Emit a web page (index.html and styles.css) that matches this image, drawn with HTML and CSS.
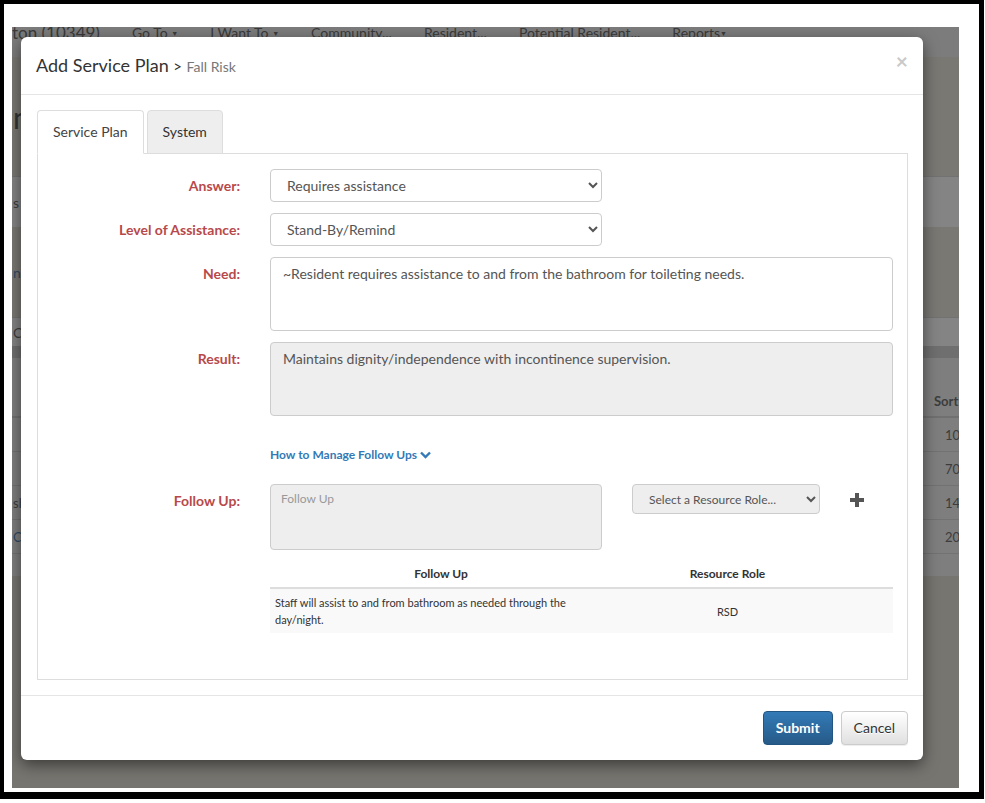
FILE: index.html
```html
<!DOCTYPE html>
<html lang="en">
  <head>
    <meta charset="UTF-8" />
    <meta name="viewport" content="width=device-width, initial-scale=1.0" />
    <title>Add Service Plan</title>
    <link rel="stylesheet" href="styles.css">
  </head>
  <body>
    <div class="frame">
      <div class="backdrop">
        <!-- dimmed app page behind the dialog -->
        <div class="app">
          <div class="app-nav">
            <span class="brand">ton (10349)</span>
            <span>Go To <i class="caret">&#9660;</i></span>
            <span>I Want To <i class="caret">&#9660;</i></span>
            <span>Community...</span>
            <span>Resident...</span>
            <span>Potential Resident...</span>
            <span>Reports<i class="caret">&#9660;</i></span>
          </div>
          <div class="app-band band-title"><span class="cut big">n</span></div>
          <div class="app-band band-light"><span class="cut">s</span></div>
          <div class="app-band band-mid"><span class="cut link">n</span></div>
          <div class="app-band band-light small"><span class="cut">C</span></div>
          <div class="app-band band-dark"></div>
          <div class="app-table">
            <div class="app-row app-gap"></div>
            <div class="app-row app-head"><span class="cut"></span><span class="sort">Sort</span></div>
            <div class="app-row"><span class="cut"></span><span class="num">100</span></div>
            <div class="app-row"><span class="cut"></span><span class="num">700</span></div>
            <div class="app-row"><span class="cut">sh</span><span class="num">1400</span></div>
            <div class="app-row"><span class="cut link">C</span><span class="num">2000</span></div>
          </div>
        </div>

        <!-- Add Service Plan dialog -->
        <div class="modal">
          <div class="modal-header">
            <h4 class="modal-title">Add Service Plan <span class="crumb">&gt;</span> <small>Fall Risk</small></h4>
            <span class="close">&times;</span>
          </div>

          <div class="modal-body">
            <ul class="tabs">
              <li class="tab active">Service Plan</li>
              <li class="tab">System</li>
            </ul>

            <div class="tab-pane">
              <div class="form-row">
                <label class="form-label" for="answer">Answer:</label>
                <div>
                  <select id="answer" class="form-select">
                    <option>Requires assistance</option>
                  </select>
                </div>
              </div>

              <div class="form-row">
                <label class="form-label" for="level">Level of Assistance:</label>
                <div>
                  <select id="level" class="form-select">
                    <option>Stand-By/Remind</option>
                  </select>
                </div>
              </div>

              <div class="form-row">
                <label class="form-label" for="need">Need:</label>
                <textarea id="need" class="form-text">~Resident requires assistance to and from the bathroom for toileting needs.</textarea>
              </div>

              <div class="form-row">
                <label class="form-label" for="result">Result:</label>
                <textarea id="result" class="form-text" disabled>Maintains dignity/independence with incontinence supervision.</textarea>
              </div>

              <div class="form-row link-row">
                <span></span>
                <a class="help-link" href="#">How to Manage Follow Ups
                  <svg width="11" height="8" viewBox="0 0 11 8"><path d="M1 1.5 L5.5 6 L10 1.5" fill="none" stroke="#337ab7" stroke-width="2.4"/></svg>
                </a>
              </div>

              <div class="form-row last-row">
                <label class="form-label" for="followUp">Follow Up:</label>
                <div>
                  <div class="follow-controls">
                    <textarea id="followUp" class="form-text follow-text" placeholder="Follow Up" disabled></textarea>
                    <select class="form-select role-select" disabled>
                      <option>Select a Resource Role...</option>
                    </select>
                    <svg class="plus" width="14" height="14" viewBox="0 0 14 14"><rect x="5" y="0" width="4" height="14" fill="#555"/><rect x="0" y="5" width="14" height="4" fill="#555"/></svg>
                  </div>

                  <table class="follow-table">
                    <colgroup>
                      <col style="width: 342px" />
                      <col style="width: 231px" />
                      <col />
                    </colgroup>
                    <thead>
                      <tr>
                        <th>Follow Up</th>
                        <th>Resource Role</th>
                        <th></th>
                      </tr>
                    </thead>
                    <tbody>
                      <tr>
                        <td>Staff will assist to and from bathroom as needed through the day/night.</td>
                        <td class="center">RSD</td>
                        <td></td>
                      </tr>
                    </tbody>
                  </table>
                </div>
              </div>
            </div>
          </div>

          <div class="modal-footer">
            <button class="btn btn-primary">Submit</button>
            <button class="btn btn-default">Cancel</button>
          </div>
        </div>
      </div>
    </div>
  </body>
</html>
```

FILE: styles.css
```css
body {
  margin: 0;
  background-color: #fff;
  font-family: Lato, "Open Sans", Arial, sans-serif;
}

.frame {
  width: 947px;
  height: 761px;
  padding: 23px 20px 4px 8px;
  border-style: solid;
  border-color: #000;
  border-width: 4px 5px 7px 4px;
}

.backdrop {
  position: relative;
  width: 947px;
  height: 761px;
  overflow: hidden;
  background-color: #777570;
}

/* app behind the overlay */
.app-nav {
  height: 30px;
  display: flex;
  gap: 32px;
  background-color: #7c7c7c;
  color: #3a3a3a;
  font-size: 14px;
  line-height: 14px;
  white-space: nowrap;
}

.app-nav span {
  margin-top: -1px;
}

.app-nav .brand {
  font-size: 17px;
  line-height: 17px;
  margin-top: -3px;
}

.caret {
  font-style: normal;
  font-size: 7px;
  vertical-align: 2px;
}

.app-band {
  display: flex;
  align-items: center;
  color: #3c3c3c;
  font-size: 14px;
}

.band-title {
  height: 119px;
  background-color: #7a7873;
}

.band-light {
  height: 50px;
  background-color: #848484;
  border-top: 1px solid #727272;
}

.band-light.small {
  height: 28px;
}

.band-mid {
  height: 90px;
  background-color: #7a7873;
}

.band-dark {
  height: 12px;
  background-color: #6f6f6f;
}

.cut {
  flex-shrink: 0;
  width: 20px;
  padding-left: 1px;
}

.cut.big {
  font-size: 30px;
  color: #333;
}

.cut.link {
  color: #2f4a63;
}

.app-table {
  background-color: #7e7e7e;
  height: 218px;
}

.app-row {
  display: flex;
  align-items: center;
  height: 33px;
  border-bottom: 1px solid #727272;
  color: #3c3c3c;
  font-size: 13px;
}

.app-gap {
  height: 27px;
  border-bottom: 0;
}

.app-head {
  height: 31px;
  border-bottom: 2px solid #707070;
}

.sort {
  flex-shrink: 0;
  margin-left: 901px;
  font-weight: 700;
}

.num {
  flex-shrink: 0;
  margin-left: 912px;
}

/* dialog */
.modal {
  position: absolute;
  left: 9px;
  top: 10px;
  width: 902px;
  background-color: #fff;
  border-radius: 6px;
  box-shadow: 0 5px 15px rgba(0, 0, 0, 0.5);
}

.modal-header {
  display: flex;
  justify-content: space-between;
  align-items: flex-start;
  height: 27px;
  padding: 15px;
  border-bottom: 1px solid #e5e5e5;
}

.modal-title {
  margin: 0;
  font-size: 18px;
  line-height: 27px;
  font-weight: 400;
  color: #333;
}

.crumb {
  font-size: 15px;
  line-height: 1;
}

.modal-title small {
  font-size: 14px;
  line-height: 1;
  color: #777;
}

.close {
  font-size: 21px;
  line-height: 21px;
  font-weight: 700;
  color: #c9c9c9;
  margin-top: -2px;
}

.modal-body {
  padding: 15px 15px 15px 16px;
}

.tabs {
  display: flex;
  gap: 3px;
  margin: 0;
  padding: 0;
  list-style: none;
  border-bottom: 1px solid #ddd;
}

.tab {
  padding: 11px 15px;
  margin-bottom: -1px;
  font-size: 14px;
  line-height: 20px;
  color: #333;
  background-color: #eee;
  border: 1px solid #ddd;
  border-radius: 4px 4px 0 0;
}

.tab.active {
  color: #444;
  background-color: #fff;
  border-bottom-color: #fff;
}

.tab-pane {
  padding: 15px 14px 46px 15px;
  border: 1px solid #ddd;
  border-top: 0;
}

.form-row {
  display: grid;
  grid-template-columns: 187px 1fr;
  column-gap: 30px;
  margin-bottom: 11px;
}

.form-row.last-row {
  margin-bottom: 0;
}

.form-label {
  padding-top: 7px;
  text-align: right;
  font-size: 14px;
  line-height: 20px;
  font-weight: 700;
  color: #b8494a;
}

.form-select {
  width: 332px;
  height: 33px;
  padding: 6px 12px;
  font-family: Lato, "Open Sans", Arial, sans-serif;
  font-size: 14px;
  color: #555;
  background-color: #fff;
  border: 1px solid #ccc;
  border-radius: 4px;
}

.form-text {
  display: block;
  width: 100%;
  height: 74px;
  box-sizing: border-box;
  padding: 6px 12px;
  font-family: Lato, "Open Sans", Arial, sans-serif;
  font-size: 14px;
  line-height: 20px;
  color: #555;
  background-color: #fff;
  border: 1px solid #ccc;
  border-radius: 4px;
  resize: none;
}

.form-text:disabled {
  background-color: #eee;
  color: #555;
}

.link-row {
  padding-top: 19px;
  margin-bottom: 21px;
}

.help-link {
  font-size: 12px;
  line-height: 17px;
  font-weight: 700;
  color: #337ab7;
  text-decoration: none;
}

.follow-controls {
  display: flex;
  align-items: flex-start;
}

.follow-text {
  width: 332px;
  height: 66px;
  font-size: 12px;
  padding: 4px 10px;
}

.follow-text::placeholder {
  color: #999;
}

.role-select {
  width: 188px;
  height: 30px;
  margin-left: 30px;
  font-size: 12px;
  padding: 4px 12px;
  background-color: #eee;
  color: #555;
  opacity: 1;
}

.plus {
  margin: 9px 0 0 30px;
}

.follow-table {
  width: 623px;
  margin-top: 10px;
  table-layout: fixed;
  border-collapse: collapse;
  color: #333;
}

.follow-table th {
  padding: 5px;
  font-size: 12px;
  line-height: 17px;
  font-weight: 700;
  border-bottom: 2px solid #ddd;
}

.follow-table td {
  padding: 5px;
  font-size: 11px;
  line-height: 17px;
  background-color: #f9f9f9;
}

.follow-table .center {
  text-align: center;
}

.modal-footer {
  display: flex;
  justify-content: flex-end;
  gap: 8px;
  padding: 15px;
  border-top: 1px solid #e5e5e5;
}

.btn {
  padding: 6px 12px;
  font-family: Lato, "Open Sans", Arial, sans-serif;
  font-size: 14px;
  line-height: 20px;
  border-radius: 4px;
  cursor: pointer;
}

.btn-primary {
  font-weight: 700;
  color: #fff;
  background-image: linear-gradient(#337ab7, #265a88);
  border: 1px solid #245580;
}

.btn-default {
  color: #333;
  background-image: linear-gradient(#fff, #e0e0e0);
  border: 1px solid #ccc;
  text-shadow: 0 1px 0 #fff;
  box-shadow: 0 1px 1px rgba(0, 0, 0, 0.075);
}
```
